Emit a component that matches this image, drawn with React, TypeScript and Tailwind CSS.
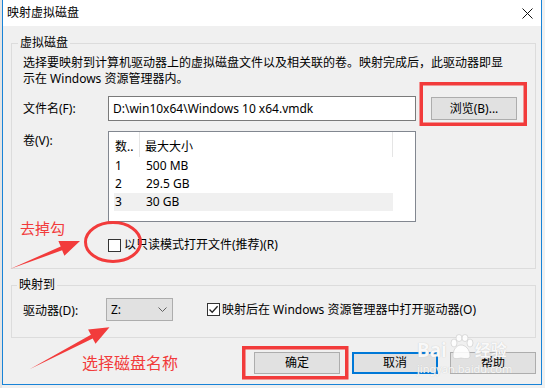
import React from "react";

function Checkbox({ checked }: { checked?: boolean }) {
  return (
    <div className="w-[13px] h-[13px] border border-[#333333] bg-white flex items-center justify-center shrink-0">
      {checked && (
        <svg width="11" height="11" viewBox="0 0 11 11">
          <path d="M1.5 5.5 L4.2 8.3 L9.6 2.2" fill="none" stroke="#222" strokeWidth="1.3" />
        </svg>
      )}
    </div>
  );
}

export default function App() {
  return (
    <div className="relative w-[545px] h-[388px] overflow-hidden bg-[#f0f0f0] flex [font-family:'Noto_Sans','Noto_Sans_CJK_SC',sans-serif] text-[12px] leading-[16px] text-black">
      <div className="w-[2px] h-full bg-[#e4e4e4]" />
      <div className="w-[540px] h-[385px] border-x border-b border-[#1883d7] flex flex-col bg-[#f0f0f0]">
        {/* Title bar */}
        <div className="h-[26px] bg-white flex items-center justify-between pl-[4px] pr-[8px] shrink-0">
          <span className="text-[12px]">映射虚拟磁盘</span>
          <svg width="11" height="11" viewBox="0 0 11 11">
            <path d="M0.5 0.5 L10.5 10.5 M10.5 0.5 L0.5 10.5" stroke="#111" strokeWidth="1" />
          </svg>
        </div>
        {/* Body */}
        <div className="flex-1 flex flex-col pl-[8px] pr-[5px]">
          <fieldset className="mt-[9px] border border-[#dcdcdc] p-0 m-0 min-w-0">
            <legend className="ml-[6px] px-[2px] leading-[16px]">虚拟磁盘</legend>
            <div className="pl-[11px] pt-[4px] pb-[15px]">
              <p className="whitespace-nowrap">
                选择要映射到计算机驱动器上的虚拟磁盘文件以及相关联的卷。映射完成后，此驱动器即显
                <br />
                示在 Windows 资源管理器内。
              </p>
              <div className="mt-[9px] flex items-center h-[25px]">
                <span className="w-[85px] shrink-0">文件名(F):</span>
                <div className="w-[308px] h-[25px] border border-[#7a7a7a] bg-white pl-[4px] flex items-center whitespace-nowrap">
                  D:\win10x64\Windows 10 x64.vmdk
                </div>
                <div className="ml-[15px] w-[86px] h-[23px] border border-[#adadad] bg-[#e1e1e1] flex items-center justify-center">
                  浏览(B)...
                </div>
              </div>
              <div className="mt-[10px] flex">
                <span className="w-[85px] pt-[2px] shrink-0">卷(V):</span>
                <div className="w-[308px] h-[91px] border border-[#828790] bg-white">
                  <div className="flex h-[25px]">
                    <div className="w-[31px] pl-[6px] pt-[7px] border-r border-[#e5e5e5] whitespace-nowrap overflow-hidden">数..</div>
                    <div className="w-[253px] pl-[5px] pt-[7px] border-r border-[#e5e5e5]">最大大小</div>
                  </div>
                  <div className="ml-[5px] w-[279px] flex flex-col">
                    <div className="flex h-[18px] items-center">
                      <span className="w-[32px] pl-[1px]">1</span>
                      <span>500 MB</span>
                    </div>
                    <div className="flex h-[18px] items-center">
                      <span className="w-[32px] pl-[1px]">2</span>
                      <span>29.5 GB</span>
                    </div>
                    <div className="flex h-[18px] items-center bg-[#f0f0f0]">
                      <span className="w-[32px] pl-[1px]">3</span>
                      <span>30 GB</span>
                    </div>
                  </div>
                </div>
              </div>
              <div className="mt-[15px] flex items-center h-[16px]">
                <span className="w-[85px] shrink-0" />
                <Checkbox />
                <span className="ml-[3px]">以只读模式打开文件(推荐)(R)</span>
              </div>
            </div>
          </fieldset>

          <fieldset className="mt-[8px] border border-[#dcdcdc] p-0 m-0 min-w-0">
            <legend className="ml-[5px] px-[2px] leading-[16px]">映射到</legend>
            <div className="pl-[11px] pt-[5px] pb-[16px]">
              <div className="flex items-center h-[23px]">
                <span className="w-[83px] shrink-0 pt-[2px]">驱动器(D):</span>
                <div className="w-[67px] h-[23px] border border-[#adadad] bg-[#e1e1e1] flex items-center justify-between pl-[4px] pr-[5px]">
                  <span>Z:</span>
                  <svg width="9" height="5" viewBox="0 0 9 5">
                    <path d="M0.5 0.5 L4.5 4.5 L8.5 0.5" fill="none" stroke="#606060" strokeWidth="1" />
                  </svg>
                </div>
                <div className="ml-[34px]">
                  <Checkbox checked />
                </div>
                <span className="ml-[2px]">映射后在 Windows 资源管理器中打开驱动器(O)</span>
              </div>
            </div>
          </fieldset>

          <div className="mt-[14px] flex justify-end gap-[12px]">
            <div className="w-[86px] h-[22px] border border-[#adadad] bg-[#e1e1e1] flex items-center justify-center">确定</div>
            <div className="w-[86px] h-[22px] border-2 border-[#0078d7] bg-[#e1e1e1] flex items-center justify-center">取消</div>
            <div className="w-[86px] h-[22px] border border-[#adadad] bg-[#e1e1e1] flex items-center justify-center">帮助</div>
          </div>
        </div>
      </div>

      {/* Baidu watermark */}
      <div className="absolute left-[417px] top-[334px] text-white/90 [text-shadow:0_0_1px_#b8b8b8] pointer-events-none">
        <div className="flex items-end">
          <span className="text-[19px] leading-[20px] font-bold">Bai</span>
          <svg width="26" height="26" viewBox="0 0 26 26" className="mx-[1px]">
            <g fill="#ffffff" fillOpacity="0.85" stroke="#c8c8c8" strokeWidth="0.6">
              <ellipse cx="6" cy="9" rx="3" ry="4" />
              <ellipse cx="11" cy="4" rx="3" ry="3.5" />
              <ellipse cx="17" cy="4" rx="3" ry="3.5" />
              <ellipse cx="22" cy="9" rx="3" ry="4" />
              <path d="M5 22 C5 14 10 11 13 11 C17 11 22 15 22 22 C22 25 18 25 13 24 C8 25 5 25 5 22 Z" />
            </g>
          </svg>
          <span className="text-[16px] leading-[20px] font-bold">经验</span>
        </div>
        <div className="text-[11px] leading-[14px] mt-[2px]">jingyan.baidu.com</div>
      </div>

      {/* Annotations */}
      <svg className="absolute left-0 top-0 pointer-events-none" width="545" height="388" viewBox="0 0 545 388">
        <rect x="421.25" y="83.75" width="104" height="40.5" fill="none" stroke="#f23b3b" strokeWidth="3.5" />
        <rect x="243.75" y="347.75" width="103" height="30" fill="none" stroke="#f23b3b" strokeWidth="3.5" />
        <ellipse cx="113" cy="242" rx="27.5" ry="19.5" fill="none" stroke="#f23b3b" strokeWidth="3" />
        <polygon points="10,269 60.7,246.5 58.4,241 80,241 64.4,255.8 62.1,250.3" fill="#f23b3b" />
        <polygon points="29.5,369.3 90.9,334.8 88.1,329.5 109.5,327.3 95.5,343.7 92.7,338.4" fill="#f23b3b" />
      </svg>
      <span className="absolute left-[20px] top-[220px] text-[15px] leading-[17px] text-[#f23b3b]">去掉勾</span>
      <span className="absolute left-[82px] top-[354px] text-[16px] leading-[18px] text-[#f23b3b]">选择磁盘名称</span>
    </div>
  );
}
